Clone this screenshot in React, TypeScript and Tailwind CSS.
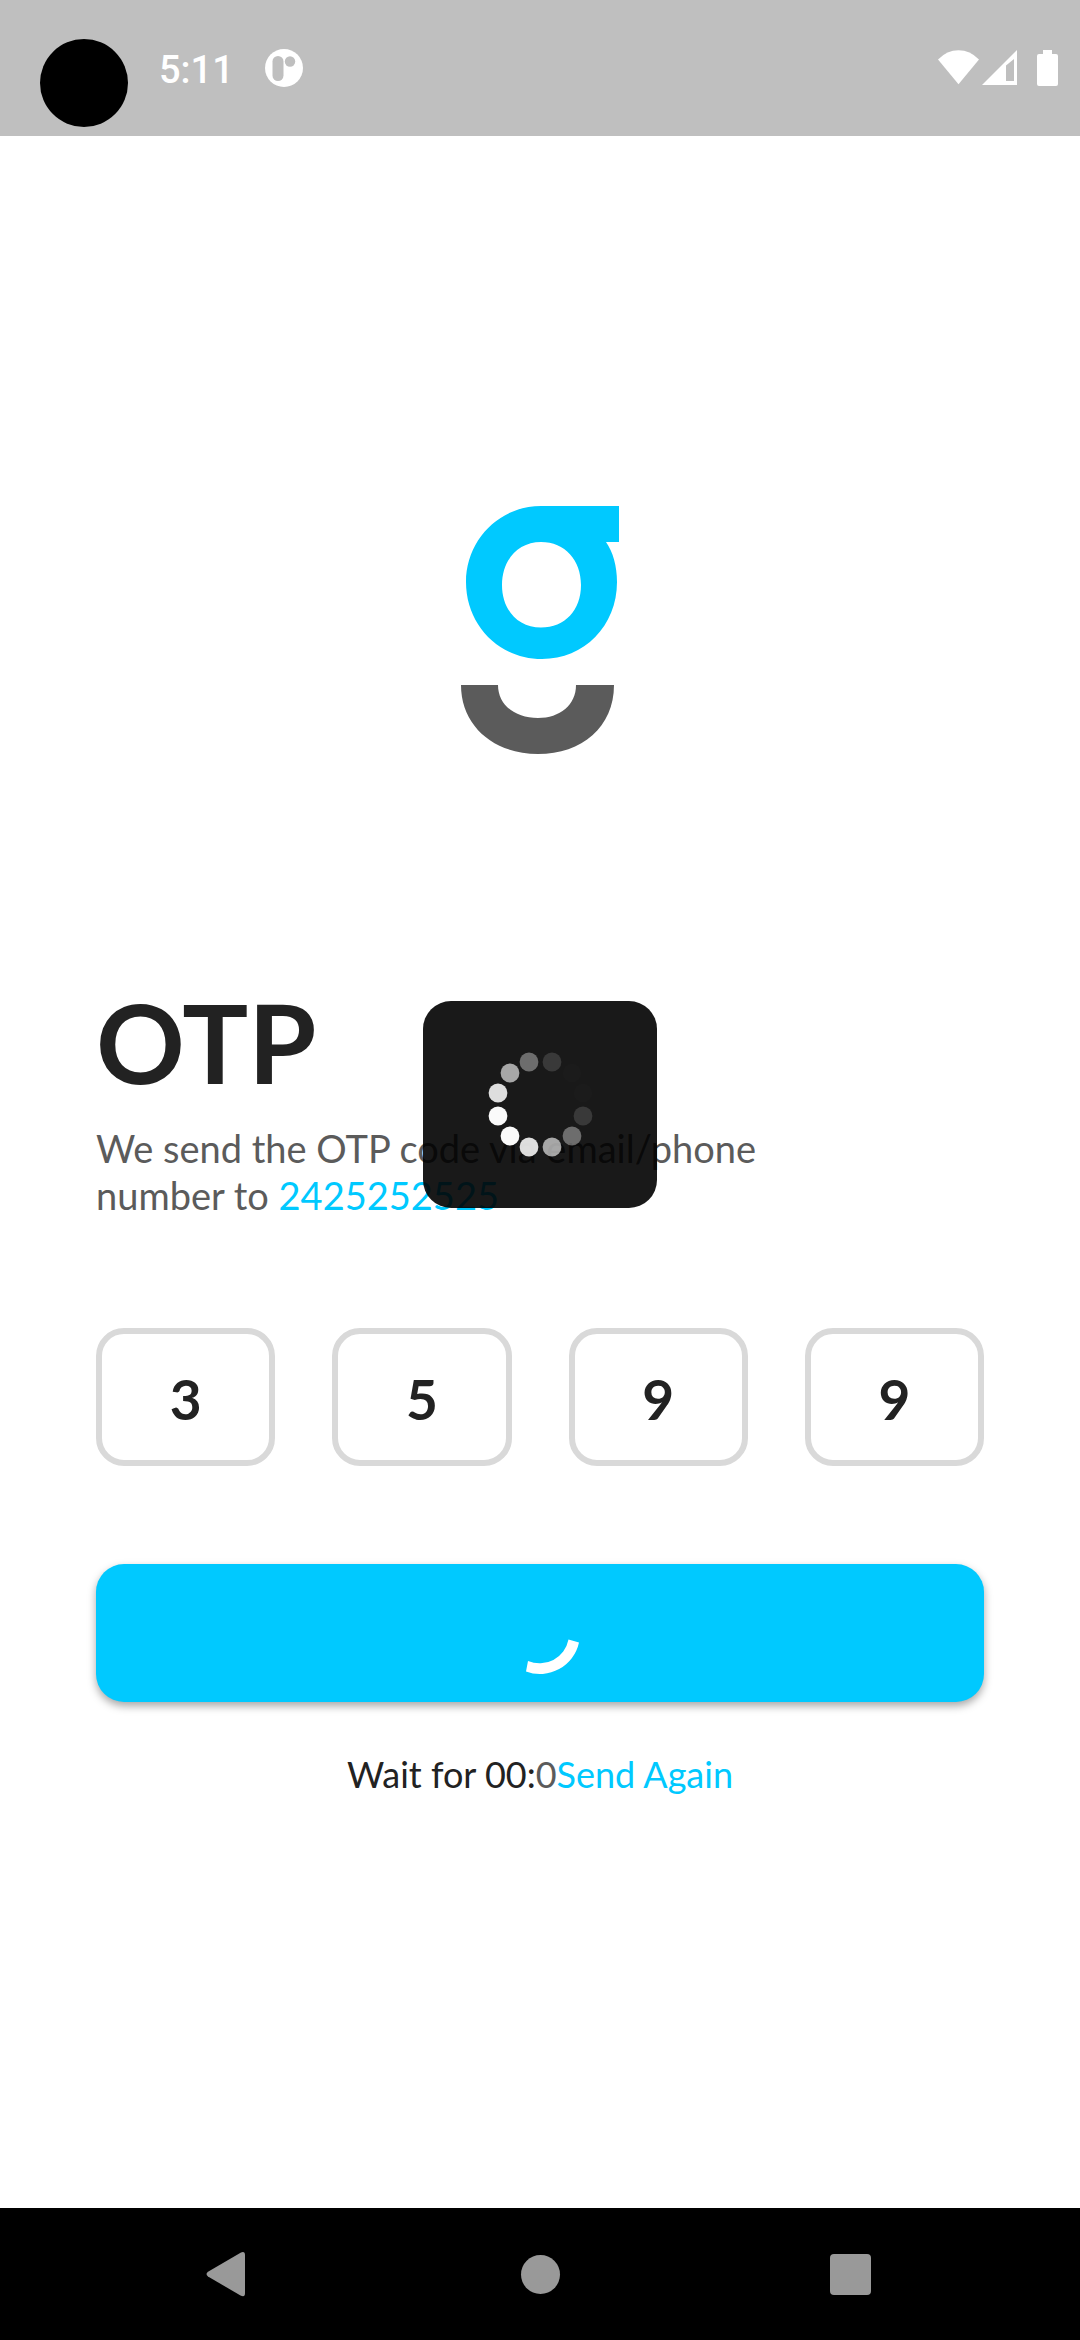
const digits = ["3", "5", "9", "9"];

const dots = [
  { x: 63, y: 17, o: 0.37 },
  { x: 86, y: 17, o: 0.14 },
  { x: 106, y: 28, o: 0.01 },
  { x: 117, y: 48, o: 0.01 },
  { x: 117, y: 71, o: 0.14 },
  { x: 106, y: 91, o: 0.37 },
  { x: 86, y: 102, o: 0.62 },
  { x: 63, y: 102, o: 0.86 },
  { x: 44, y: 91, o: 0.98 },
  { x: 32, y: 71, o: 0.98 },
  { x: 32, y: 48, o: 0.86 },
  { x: 44, y: 28, o: 0.62 },
];

function StatusBar() {
  return (
    <header className="flex h-[136px] items-start bg-[#bfbfbf] pl-10 pr-[22px] text-white">
      <span className="mt-[39px] size-[88px] rounded-full bg-black" />
      <time className="ml-[31px] mt-[47px] font-[Roboto] text-[38px] font-medium leading-[46px]">
        5:11
      </time>
      <svg className="ml-[31px] mt-[49px] h-[38px] w-[38px]" viewBox="0 0 38 38" aria-hidden="true">
        <circle cx="19" cy="19" r="19" fill="#fff" />
        <rect x="7.5" y="7" width="11" height="25" rx="5.5" fill="#bfbfbf" />
        <circle cx="25" cy="12.5" r="5.2" fill="#bfbfbf" />
      </svg>
      <svg className="ml-auto mt-[50px] h-[36px] w-[120px]" viewBox="0 0 120 36" fill="#fff" aria-hidden="true">
        <path d="M0 9.5Q9 .3 20.5 .3T41 9.5L20.5 34.3Z" />
        <path d="M44 35 79 0V35ZM68 15.500V31H76V9Z" fillRule="evenodd" />
        <path d="M105 0h9v4h4q2 0 2 2v28q0 2-2 2h-17q-2 0-2-2V6q0-2 2-2h4z" />
      </svg>
    </header>
  );
}

function Logo() {
  return (
    <svg className="mx-auto h-[248px] w-[158px]" viewBox="0 0 158 248" role="img" aria-label="g logo">
      <path
        fill="#00c9ff"
        fillRule="evenodd"
        d="M80 0H158V36H145C152 46 156 60 156 76C156 120 123 153 81 153C38 153 5 119 5 76C5 34 38 0 80 0ZM80 36C57 36 41 54 41 79C41 104 57 121.500 80 121.500C104 121.500 120 104 120 79C120 54 104 36 80 36Z"
      />
      <path
        fill="#5b5b5b"
        d="M0 179H37C37 199 54 212 77 212C99 212 115 199 115 179H153C153 221 121 248 77 248C33 248 0 220 0 179Z"
      />
    </svg>
  );
}

function LoadingOverlay() {
  return (
    <div className="pointer-events-none absolute inset-0 flex items-center justify-center">
      <div
        role="status"
        aria-label="Loading"
        className="flex h-[207px] w-[234px] items-center justify-center rounded-[28px] bg-black/90"
      >
        <svg className="h-[119px] w-[149px]" viewBox="0 0 149 119" fill="#fff">
          {dots.map((d) => (
            <circle key={`${d.x}-${d.y}`} cx={d.x} cy={d.y} r="9.4" fillOpacity={d.o} />
          ))}
        </svg>
      </div>
    </div>
  );
}

function NavBar() {
  return (
    <nav className="grid h-[132px] grid-cols-3 bg-black px-[75px] text-[#999]">
      <button type="button" aria-label="Back" className="flex items-center justify-center">
        <svg className="size-[66px]" viewBox="0 0 66 66" fill="currentColor">
          <path d="M44 11.500Q48 10 48 14V52Q48 57 43.500 54.500L11 35.500Q8 33 11 30.700Z" />
        </svg>
      </button>
      <button type="button" aria-label="Home" className="flex items-center justify-center">
        <svg className="size-[66px]" viewBox="0 0 66 66" fill="currentColor">
          <circle cx="33.500" cy="33.500" r="19.500" />
        </svg>
      </button>
      <button type="button" aria-label="Recent apps" className="flex items-center justify-center">
        <svg className="size-[66px]" viewBox="0 0 66 66" fill="currentColor">
          <rect x="13" y="13" width="41" height="41" rx="4" />
        </svg>
      </button>
    </nav>
  );
}

export default function App() {
  return (
    <div className="flex min-h-screen flex-col bg-white font-[Lato,sans-serif] text-[#222]">
      <div className="relative flex flex-1 flex-col">
        <StatusBar />
        <main className="flex flex-1 flex-col px-24 pt-[370px]">
          <Logo />
          <h1 className="mt-[221px] text-[110px] font-bold leading-[132px]">OTP</h1>
          <p className="mt-[18px] max-w-[720px] text-[38px] leading-[47px] text-[#5b5b5b]">
            We send the OTP code via email/phone number to{" "}
            <span className="text-[#00c9ff]">2425252525</span>
          </p>
          <form onSubmit={(e) => e.preventDefault()}>
            <div className="mt-[109px] grid grid-cols-4 gap-[57px]">
              {digits.map((d, i) => (
                <input
                  key={i}
                  aria-label={`Digit ${i + 1}`}
                  defaultValue={d}
                  maxLength={1}
                  inputMode="numeric"
                  className="h-[138px] w-full min-w-0 rounded-[28px] border-[6px] border-[#d9d9d9] bg-white pt-1 text-center text-[55px] font-bold outline-none"
                />
              ))}
            </div>
            <button
              type="submit"
              aria-label="Verifying"
              className="mt-[98px] flex h-[138px] w-full items-center justify-center rounded-[28px] bg-[#00c9ff] shadow-[0_4px_8px_rgba(0,0,0,0.35)]"
            >
              <svg className="size-[96px]" viewBox="0 0 96 96" fill="#fff">
                <path d="M87 57.500A40 40 0 0 1 34 86.500L36 76A29.500 29.500 0 0 0 76.500 54.500Z" />
              </svg>
            </button>
          </form>
          <p className="mt-[51px] text-center text-[36px] leading-[43px]">
            Wait for 00:<span className="text-[#5b5b5b]">0</span>
            <button type="button" className="text-[#00c9ff]">
              Send Again
            </button>
          </p>
        </main>
        <LoadingOverlay />
      </div>
      <NavBar />
    </div>
  );
}
